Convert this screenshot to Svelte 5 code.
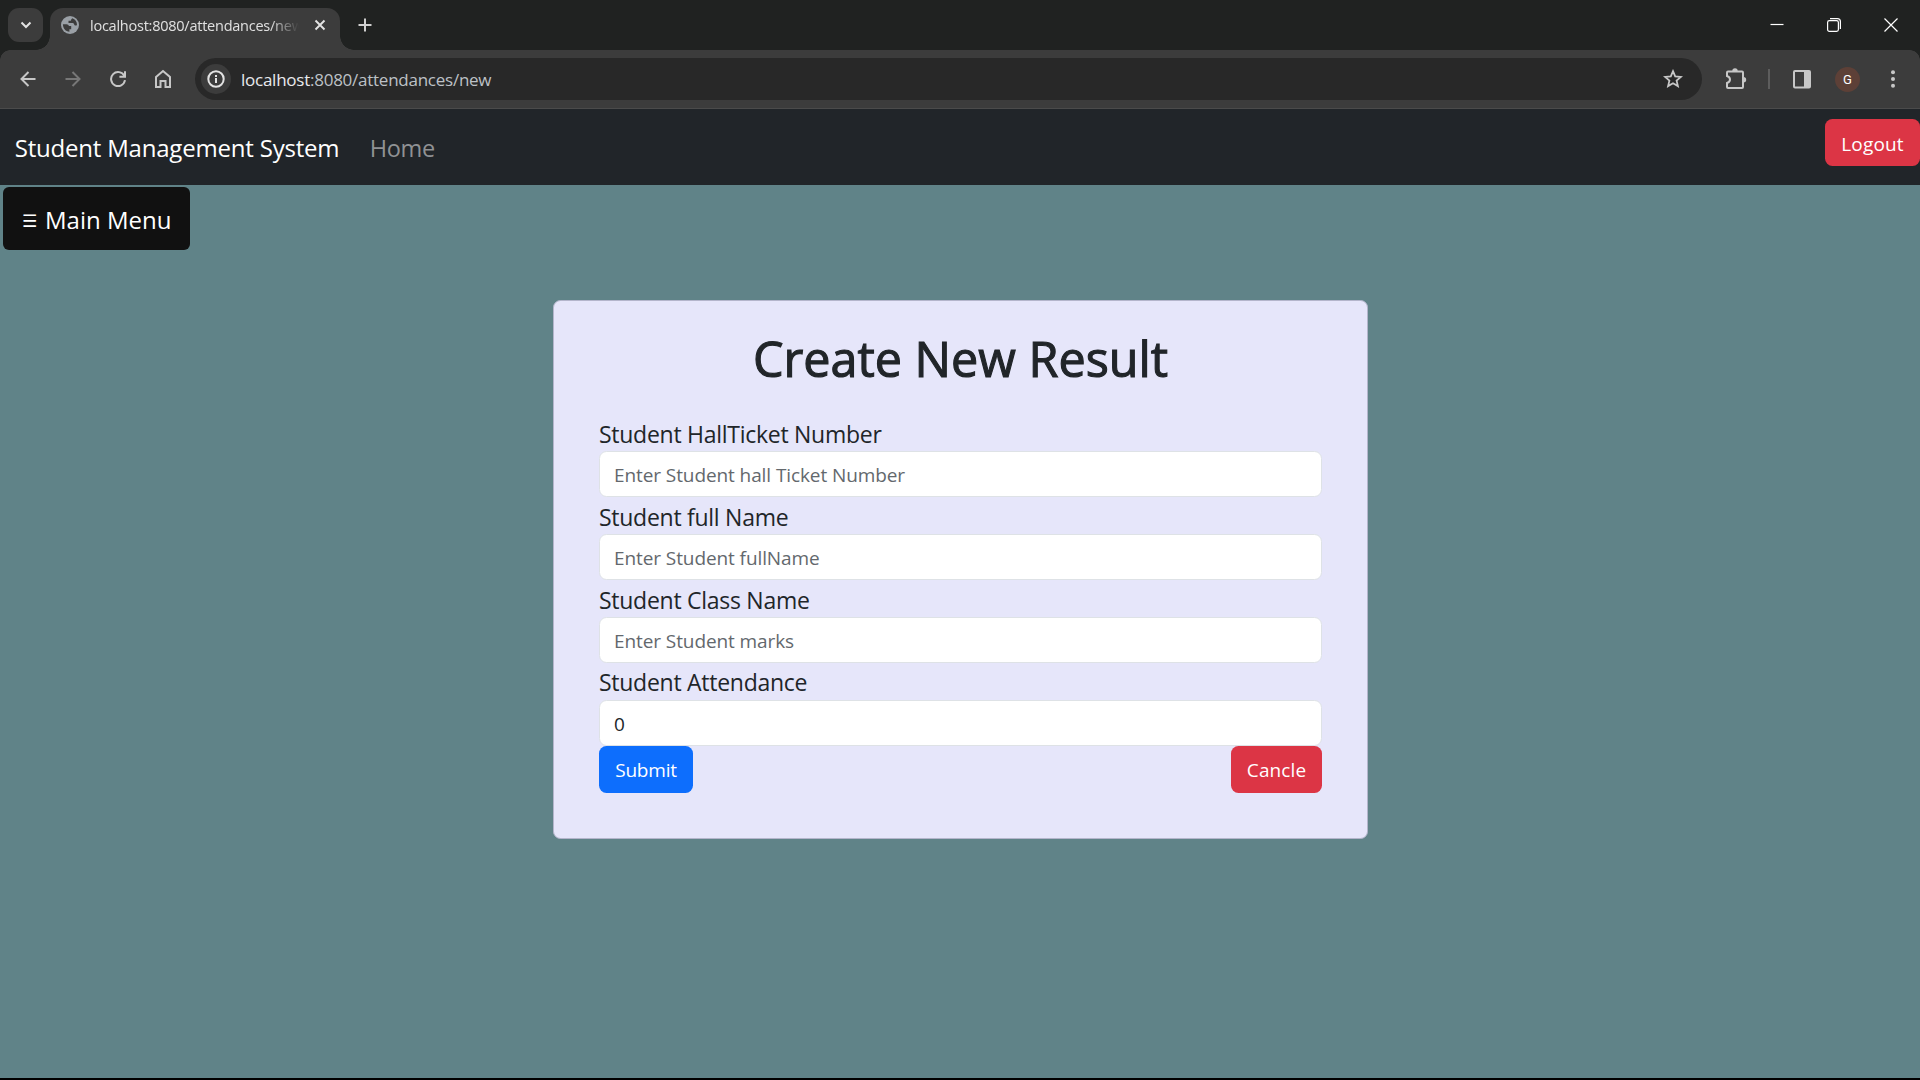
<script>
  let fields = $state([
    { id: 'ticket', label: 'Student HallTicket Number', placeholder: 'Enter Student hall Ticket Number', value: '' },
    { id: 'name', label: 'Student full Name', placeholder: 'Enter Student fullName', value: '' },
    { id: 'class', label: 'Student Class Name', placeholder: 'Enter Student marks', value: '' },
    { id: 'attendance', label: 'Student Attendance', placeholder: '', value: '0' }
  ]);
</script>

<div class="window">
  <header class="tabs">
    <button class="tab-search" aria-label="Search tabs">
      <svg width="12" height="12" viewBox="0 0 12 12"><path d="M1.500 3.500 6 8l4.500-4.500" /></svg>
    </button>
    <div class="tab">
      <svg class="globe" width="18" height="18" viewBox="0 0 18 18">
        <circle cx="9" cy="9" r="9" />
        <path d="M1.900 8.300h3.500c1.500 0 2.200.9 2.500 1.700h2.300v3.200H8.400v2.600C4.700 15.600 2 12.500 1.900 8.300ZM11.300 2.200c2.900 1 4.800 3.700 4.700 6.800-.8.800-1.900.8-2.600 0-.4-1.600-1.200-1.900-2.800-1.900H7.500V4.700h2.300c.3-1.200.8-1.800 1.500-2.500Z" />
      </svg>
      <span class="tab-title">localhost:8080/attendances/new</span>
      <svg class="close" width="12" height="12" viewBox="0 0 12 12"><path d="m1.500 1.500 9 9m0-9-9 9" /></svg>
    </div>
    <svg class="plus" width="14" height="14" viewBox="0 0 14 14"><path d="M7 .5v13M.5 7h13" /></svg>
    <div class="controls">
      <svg width="14" height="14" viewBox="0 0 14 14"><path d="M.5 6.500h13" /></svg>
      <svg width="14" height="14" viewBox="0 0 14 14"><rect x=".6" y="2.600" width="10.800" height="10.800" rx="1.800" /><path d="M3 .6h7.400a3 3 0 0 1 3 3V11" /></svg>
      <svg width="14" height="14" viewBox="0 0 14 14"><path d="m.5.500 13 13m0-13-13 13" /></svg>
    </div>
  </header>

  <div class="toolbar">
    <span class="tool"><svg width="16" height="16" viewBox="0 0 16 16"><path d="M15.500 8H1.500M8.500 1 1.500 8l7 7" /></svg></span>
    <span class="tool dim"><svg width="16" height="16" viewBox="0 0 16 16"><path d="M.5 8h14M7.500 1l7 7-7 7" /></svg></span>
    <span class="tool"><svg width="18" height="18" viewBox="0 0 18 18"><path d="M15.300 5.800A7 7 0 1 0 16 10.200M16 1.200v5.600h-5.600" /></svg></span>
    <span class="tool"><svg width="18" height="20" viewBox="0 0 18 20"><path d="M2 8 9 2l7 6v10h-4.500v-6h-5v6H2Z" /></svg></span>
    <div class="omnibox">
      <span class="info"><svg width="18" height="18" viewBox="0 0 18 18"><circle cx="9" cy="9" r="7.700" /><path d="M9 8v5M9 5v1.900" /></svg></span>
      <span class="url"><b>localhost</b>:8080/attendances/new</span>
      <svg class="star" width="20" height="20" viewBox="0 0 20 20"><path d="m10 2.200 2.200 5.200 5.700.5-4.300 3.700 1.300 5.500L10 14.200l-4.900 2.900 1.300-5.500-4.300-3.700 5.700-.5Z" /></svg>
    </div>
    <span class="tool puzzle">
      <svg width="22" height="22" viewBox="0 0 22 22"><path d="M2 4.500Q2 3.500 3 3.500H17Q18 3.500 18 4.500V19Q18 20 17 20H3Q2 20 2 19V15C6 13.500 6 9.500 2 8Z" /><path class="solid" d="M7.300 3a2.700 2.700 0 0 1 5.400 0ZM18.500 9a2.700 2.700 0 0 1 0 5.400Z" /></svg>
    </span>
    <span class="sep"></span>
    <span class="tool panel"><svg width="20" height="20" viewBox="0 0 20 20"><rect x="2" y="2" width="16" height="16.500" rx="1" /><path class="solid" d="M12 2h6v16.500h-6Z" /></svg></span>
    <span class="tool"><span class="avatar">G</span></span>
    <span class="tool"><svg width="6" height="20" viewBox="0 0 6 20"><circle class="solid" cx="3" cy="3.200" r="2" /><circle class="solid" cx="3" cy="10" r="2" /><circle class="solid" cx="3" cy="16.800" r="2" /></svg></span>
  </div>

  <nav class="navbar">
    <span class="brand">Student Management System</span>
    <span class="home">Home</span>
    <button class="btn danger logout">Logout</button>
  </nav>

  <main>
    <button class="menu"><span class="bars">☰</span><span>Main Menu</span></button>
    <form class="card">
      <h1>Create New Result</h1>
      {#each fields as field (field.id)}
        <label for={field.id}>{field.label}</label>
        <input id={field.id} placeholder={field.placeholder} bind:value={field.value} />
      {/each}
      <div class="actions">
        <button type="button" class="btn primary">Submit</button>
        <button type="button" class="btn danger cancel">Cancle</button>
      </div>
    </form>
  </main>
</div>

<style>
  :global(body) { margin: 0; }
  * { box-sizing: border-box; }
  .window {
    display: flex; flex-direction: column; height: 1080px; overflow: hidden;
    border-bottom: 2px solid #000; background: #608388;
    font-family: "Open Sans", "Noto Sans", sans-serif; color: #212529;
  }
  button { border: 0; font-family: inherit; color: #fff; white-space: nowrap; }
  svg { display: block; flex: none; fill: none; stroke: #c7c7c7; stroke-width: 2; }
  .solid { fill: #c7c7c7; stroke: none; }

  .tabs { display: flex; flex: none; height: 50px; padding: 8px 22px 0 8px; background: #202221; }
  .tab-search { display: grid; place-items: center; width: 35px; height: 34px; padding: 0; border-radius: 11px; background: #3c3c3c; }
  .tab-search svg { stroke: #e3e3e3; }
  .tab {
    position: relative; display: flex; align-items: center; width: 290px; height: 42px;
    margin-left: 7px; padding: 0 14px 8px 11px; border-radius: 13px 13px 0 0; background: #3c3c3c;
  }
  .tab::before, .tab::after { content: ''; position: absolute; bottom: 0; width: 14px; height: 14px; }
  .tab::before { right: 100%; background: radial-gradient(circle at 0 0, transparent 13.5px, #3c3c3c 14px); }
  .tab::after { left: 100%; background: radial-gradient(circle at 100% 0, transparent 13.5px, #3c3c3c 14px); }
  .globe circle { fill: #9aa0a6; stroke: none; }
  .globe path { fill: #3c3c3c; stroke: none; }
  .tab-title {
    width: 214px; margin-left: 11px; padding-top: 1px; white-space: nowrap;
    font-size: 14.5px; line-height: 20px; letter-spacing: -0.24px; color: #e0e0e0;
    mask-image: linear-gradient(to right, #000 180px, transparent 209px);
  }
  .close { margin-left: auto; stroke: #e3e3e3; stroke-width: 1.900; }
  .plus { margin: 10px 0 0 18px; stroke: #d0d0d0; }
  .controls { display: flex; gap: 43px; margin: 10px 0 0 auto; }
  .controls svg { stroke: #fff; stroke-width: 1.200; }

  .toolbar {
    display: flex; flex: none; align-items: center; height: 59px; padding: 0 5px;
    border-bottom: 1px solid #4b4b4b;
    background:
      radial-gradient(circle at 10px 10px, #3c3c3c 9.500px, #202221 10px) 0 0 / 10px 10px no-repeat,
      radial-gradient(circle at 0 10px, #3c3c3c 9.500px, #202221 10px) 100% 0 / 10px 10px no-repeat,
      #3c3c3c;
  }
  .tool { display: grid; flex: none; place-items: center; width: 45px; height: 45px; }
  .tool.dim svg { stroke: #777; }
  .tool.panel { padding-right: 1px; }
  .omnibox { display: flex; flex: 1; align-items: center; height: 42px; margin: 0 11px 0 10px; padding: 0 19px 0 6px; border-radius: 21px; background: #282828; }
  .info { display: grid; place-items: center; width: 30px; height: 30px; border-radius: 50%; background: #3c3c3c; }
  .info svg { stroke: #e3e3e3; }
  .url { margin-left: 10px; padding-top: 1px; font-size: 17px; line-height: 24px; letter-spacing: -0.25px; color: #bdc1c6; }
  .url b { font-weight: 400; color: #e8eaed; }
  .star { margin-left: auto; stroke-width: 1.800; }
  .sep { width: 2px; height: 20px; margin: 0 10px; background: #5d5d5d; }
  .avatar { display: grid; place-items: center; width: 25px; height: 25px; border-radius: 50%; background: #5d4037; font: 400 13px Roboto, sans-serif; color: #fff; }

  .navbar { display: flex; flex: none; align-items: center; height: 76px; padding-left: 14.700px; background: #212529; }
  .brand { width: 355px; font-size: 24px; letter-spacing: -0.200px; color: #fff; white-space: nowrap; }
  .home { padding-top: 1px; font-size: 23.500px; letter-spacing: -0.300px; color: #909294; }
  .btn { height: 47px; padding: 2px 0 0; border-radius: 7.500px; font-size: 19px; line-height: 26px; }
  .primary { width: 94px; background: #0d6efd; letter-spacing: -0.200px; }
  .danger { background: #dc3545; }
  .logout { align-self: flex-start; width: 95px; margin: 10px 0 0 auto; letter-spacing: 0.150px; }
  .cancel { width: 91px; letter-spacing: 0.100px; }

  main { display: flex; flex: 1; flex-direction: column; align-items: flex-start; padding: 2px 0 0 3px; }
  .menu { display: flex; align-items: center; height: 63px; width: 187px; padding: 2px 0 0 19px; border-radius: 6px; background: #111; font-size: 24px; letter-spacing: 0; }
  .bars { width: 23px; padding-top: 3px; font-family: "DejaVu Sans", sans-serif; font-size: 17px; line-height: 20px; text-align: left; }
  .card {
    display: flex; flex-direction: column; align-self: center; width: 815px; height: 539px;
    margin: 50px 2px 0 0; padding: 26.500px 45px 0; border: 1px solid #b4b5cb; border-radius: 7.500px; background: #e6e6fa;
  }
  h1 { margin: 0 0 27px; font-size: 48.500px; font-weight: 500; line-height: 60px; text-align: center; -webkit-text-stroke: 1.100px #212529; }
  label { height: 36.800px; padding-top: 2.500px; font-size: 23px; line-height: 35px; letter-spacing: -0.270px; }
  input {
    height: 46px; padding: 2px 14px 0; border: 1px solid #dee2e6; border-radius: 7.500px; outline: 0;
    background: #fff; font: 19px "Open Sans", "Noto Sans", sans-serif; letter-spacing: -0.090px; color: #212529;
  }
  input::placeholder { color: #63686d; opacity: 1; }
  .actions { display: flex; justify-content: space-between; }
</style>
